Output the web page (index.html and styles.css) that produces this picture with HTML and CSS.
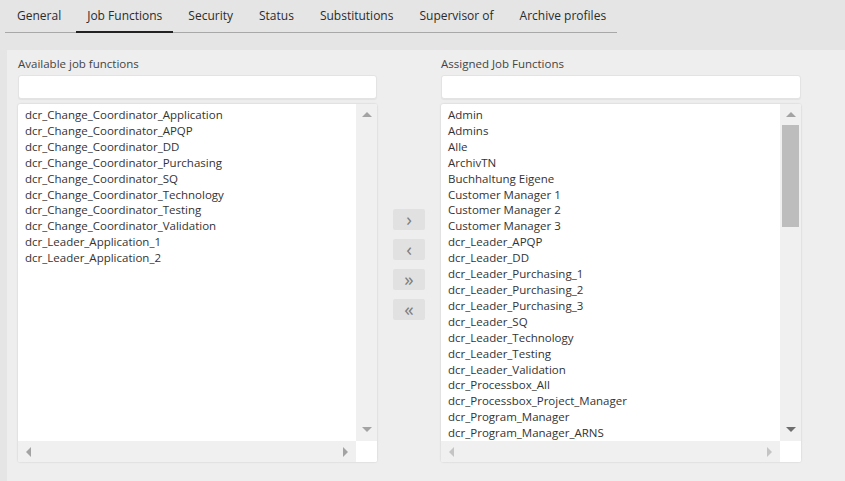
FILE: index.html
```html
<!DOCTYPE html>
<html lang="en">
<head>
  <meta charset="UTF-8">
  <title>Job Functions</title>
  <link rel="stylesheet" href="styles.css">
</head>
<body>
  <ul class="tabs">
    <li>General</li>
    <li class="active">Job Functions</li>
    <li>Security</li>
    <li>Status</li>
    <li>Substitutions</li>
    <li>Supervisor of</li>
    <li>Archive profiles</li>
  </ul>

  <div class="panel">
    <div class="col">
      <label>Available job functions</label>
      <input type="text" class="filter">
      <div class="listbox">
        <ul class="items">
          <li>dcr_Change_Coordinator_Application</li>
          <li>dcr_Change_Coordinator_APQP</li>
          <li>dcr_Change_Coordinator_DD</li>
          <li>dcr_Change_Coordinator_Purchasing</li>
          <li>dcr_Change_Coordinator_SQ</li>
          <li>dcr_Change_Coordinator_Technology</li>
          <li>dcr_Change_Coordinator_Testing</li>
          <li>dcr_Change_Coordinator_Validation</li>
          <li>dcr_Leader_Application_1</li>
          <li>dcr_Leader_Application_2</li>
        </ul>
        <div class="vbar">
          <div class="abox"><span class="arr up"></span></div>
          <div class="track"></div>
          <div class="abox"><span class="arr down"></span></div>
        </div>
        <div class="hbar">
          <div class="abox"><span class="arr left"></span></div>
          <div class="abox"><span class="arr right"></span></div>
        </div>
        <div class="corner"></div>
      </div>
    </div>

    <div class="moves">
      <button>&rsaquo;</button>
      <button>&lsaquo;</button>
      <button>&raquo;</button>
      <button>&laquo;</button>
    </div>

    <div class="col">
      <label>Assigned Job Functions</label>
      <input type="text" class="filter">
      <div class="listbox">
        <ul class="items">
          <li>Admin</li>
          <li>Admins</li>
          <li>Alle</li>
          <li>ArchivTN</li>
          <li>Buchhaltung Eigene</li>
          <li>Customer Manager 1</li>
          <li>Customer Manager 2</li>
          <li>Customer Manager 3</li>
          <li>dcr_Leader_APQP</li>
          <li>dcr_Leader_DD</li>
          <li>dcr_Leader_Purchasing_1</li>
          <li>dcr_Leader_Purchasing_2</li>
          <li>dcr_Leader_Purchasing_3</li>
          <li>dcr_Leader_SQ</li>
          <li>dcr_Leader_Technology</li>
          <li>dcr_Leader_Testing</li>
          <li>dcr_Leader_Validation</li>
          <li>dcr_Processbox_All</li>
          <li>dcr_Processbox_Project_Manager</li>
          <li>dcr_Program_Manager</li>
          <li>dcr_Program_Manager_ARNS</li>
        </ul>
        <div class="vbar">
          <div class="abox"><span class="arr up"></span></div>
          <div class="track"><div class="thumb"></div></div>
          <div class="abox"><span class="arr down dark"></span></div>
        </div>
        <div class="hbar">
          <div class="abox"><span class="arr left light"></span></div>
          <div class="abox"><span class="arr right light"></span></div>
        </div>
        <div class="corner"></div>
      </div>
    </div>
  </div>
</body>
</html>
```

FILE: styles.css
```css
body { margin: 0; background-color: #e5e5e5; font-family: "Open Sans", Arial, sans-serif; color: #333; height: 481px; overflow: hidden; }

.tabs { display: flex; gap: 4px; width: fit-content; margin: 0 0 0 5px; padding: 0; list-style: none; border-bottom: 1px solid #a8a8a8; }
.tabs li { font-size: 12px; line-height: 20px; padding: 6px 11px 5px; border-bottom: 2px solid transparent; margin-bottom: -1px; color: #2b2b2b; }
.tabs li:first-child { padding-left: 12px; }
.tabs li.active { border-bottom-color: #222; }

.panel { display: flex; margin: 17px 0 0 7px; background-color: #eeeeee; height: 431px; padding: 6px 0 0 11px; box-sizing: border-box; }
.col { width: 360px; display: flex; flex-direction: column; }
.col:first-child { width: 359px; }
.col label { font-size: 11.5px; line-height: 16px; color: #444; }
.filter { margin: 3px 0 0; height: 24px; box-sizing: border-box; border: 1px solid #e3e3e3; border-radius: 3px; background: #fff; box-shadow: 0 1px 1px rgba(0,0,0,0.05); padding: 0 6px; font-family: inherit; }

.listbox { margin-top: 5px; height: 358px; background: #fff; border-radius: 2px; box-shadow: 0 0 2px rgba(0,0,0,0.18); display: grid; grid-template-columns: 1fr 21px; grid-template-rows: 1fr 21px; overflow: hidden; }
.items { list-style: none; margin: 0; padding: 3px 0 0 7px; overflow: hidden; font-size: 11.5px; line-height: 15.9px; color: #333; white-space: nowrap; }

.vbar { background: #f0f0f0; display: flex; flex-direction: column; }
.track { flex: 1; }
.thumb { margin: 0 2px; height: 102px; background: #bdbdbd; }
.hbar { background: #f0f0f0; display: flex; justify-content: space-between; }
.corner { background: #fff; }
.abox { width: 21px; height: 21px; display: flex; align-items: center; justify-content: center; }
.vbar .abox { width: auto; }

.arr { width: 0; height: 0; border: 5px solid transparent; }
.arr.up { border-top: 0; border-bottom-color: #a3a3a3; margin-top: -1px; }
.arr.down { border-bottom: 0; border-top-color: #a3a3a3; margin-top: -3px; }
.arr.left { border-left: 0; border-right-color: #a3a3a3; }
.arr.right { border-right: 0; border-left-color: #a3a3a3; }
.arr.down.dark { border-top-color: #6e6e6e; }
.arr.left.light { border-right-color: #c4c4c4; }
.arr.right.light { border-left-color: #c4c4c4; }

.moves { width: 64px; display: flex; flex-direction: column; align-items: center; gap: 9px; padding-top: 153px; }
.moves button { width: 32px; height: 21px; border: none; border-radius: 2px; background: #e1e1e1; color: #7d7d7d; font-family: "Open Sans", sans-serif; font-size: 19px; line-height: 19px; padding: 0 0 1px; cursor: pointer; }
```
